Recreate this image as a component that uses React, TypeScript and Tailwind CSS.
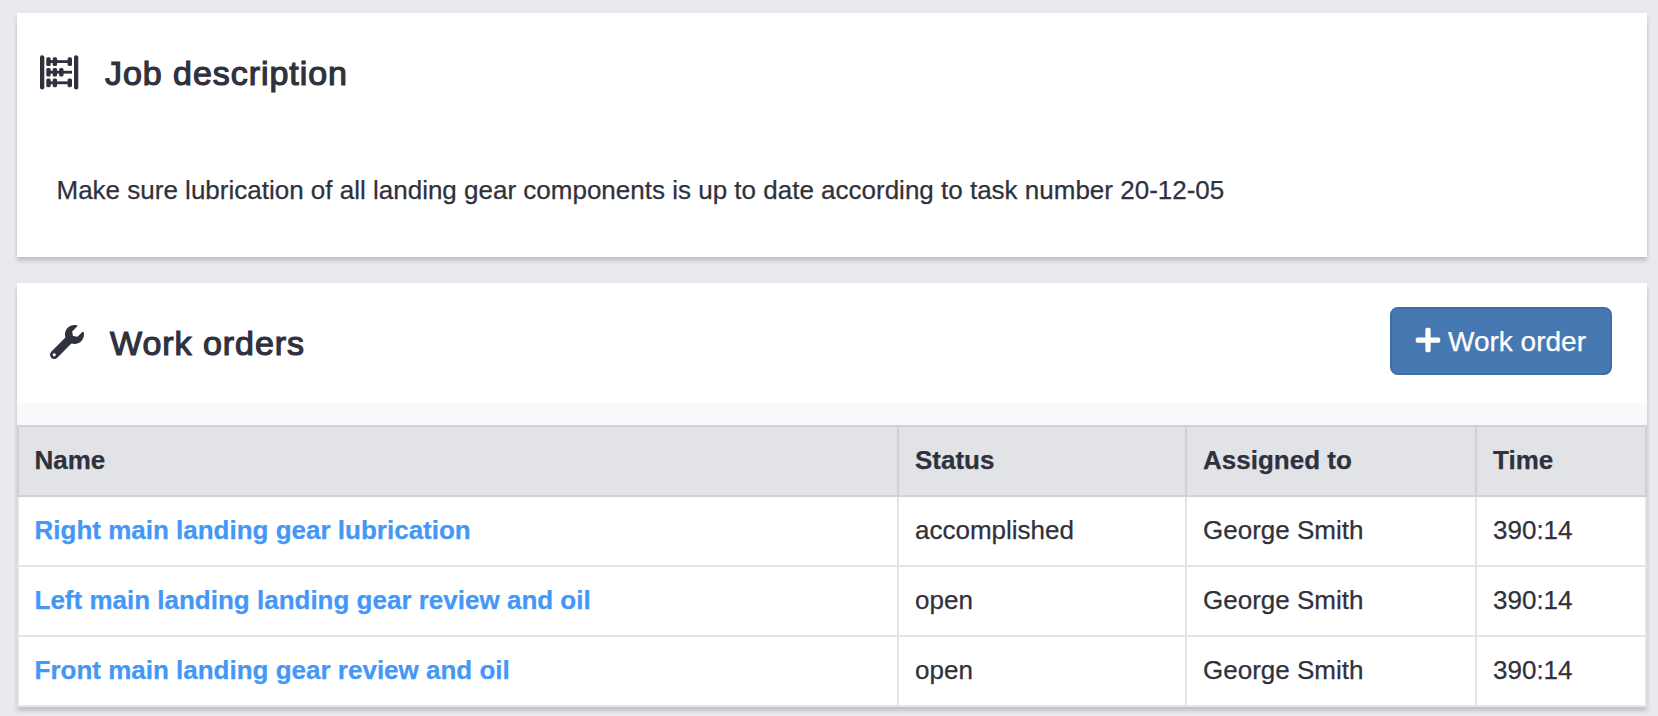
import { FaPlus, FaWrench } from "react-icons/fa";

const orders = [
  { name: "Right main landing gear lubrication", status: "accomplished", assignee: "George Smith", time: "390:14" },
  { name: "Left main landing landing gear review and oil", status: "open", assignee: "George Smith", time: "390:14" },
  { name: "Front main landing gear review and oil", status: "open", assignee: "George Smith", time: "390:14" },
];

const cardShadow = "shadow-[0_4px_4px_rgba(0,0,0,0.14),0_2px_6px_rgba(0,0,0,0.05)]";
const headingText = "text-[34px] leading-[40px] tracking-[0.95px] [-webkit-text-stroke:1.2px_currentColor]";

const beads = [
  { y: 2.3, xs: [7.3, 13.7, 28.6] },
  { y: 12.9, xs: [7.3, 13.7, 20.1] },
  { y: 23.5, xs: [7.3, 13.7, 28.6] },
];

function AbacusIcon() {
  return (
    <svg width="40" height="36" viewBox="0 0 40 36" fill="currentColor" stroke="none" className="shrink-0">
      <rect x="1" y="0.2" width="4.3" height="34.4" rx="2.1" />
      <rect x="35" y="0.2" width="4.3" height="34.4" rx="2.1" />
      {beads.map((row) => (
        <g key={row.y}>
          <rect x="8" y={row.y + 2.9} width="25" height="2.8" />
          {row.xs.map((x) => (
            <rect key={x} x={x} y={row.y} width="4.4" height="8.7" rx="1.6" />
          ))}
        </g>
      ))}
    </svg>
  );
}

export default function App() {
  return (
    <div className="flex h-[716px] w-[1658px] flex-col gap-[26px] overflow-hidden bg-[#e9eaee] pt-[13px] pr-[11px] pl-[17px] font-['Liberation_Sans',Arial,sans-serif] text-[26px] text-[#2f313c] [-webkit-text-stroke:0.25px_currentColor]">
      <section className={`h-[244px] shrink-0 bg-white ${cardShadow}`}>
        <header className="flex h-[120px] items-center pl-[22px]">
          <AbacusIcon />
          <h2 className={`pl-[26px] ${headingText}`}>Job description</h2>
        </header>
        <p className="pt-[42px] pl-[39.5px] leading-[30px]">
          Make sure lubrication of all landing gear components is up to date according to task number 20-12-05
        </p>
      </section>

      <section className={`shrink-0 bg-[#f8f9fb] ${cardShadow}`}>
        <header className="flex h-[120px] items-center bg-white pr-[35px] pl-[33px]">
          <FaWrench className="mb-[2px] size-[34px] shrink-0" />
          <h2 className={`pl-[26px] ${headingText}`}>Work orders</h2>
          <button className="mb-[4px] ml-auto flex h-[68px] w-[222px] items-center gap-[6px] rounded-[8px] border-2 border-[#3f6ca6] bg-[#4679b2] pl-[22px] text-[28px] text-white">
            <FaPlus className="mb-[2px] shrink-0" />
            <span className="pt-[1px] whitespace-nowrap">Work order</span>
          </button>
        </header>
        <table className="mt-[22px] w-full table-fixed border-separate border-spacing-0 bg-white text-left">
          <colgroup>
            <col className="w-[882px]" />
            <col className="w-[288px]" />
            <col className="w-[290px]" />
            <col className="w-[170px]" />
          </colgroup>
          <thead>
            <tr className="h-[72px] bg-[#e2e3e7]">
              {["Name", "Status", "Assigned to", "Time"].map((label) => (
                <th
                  key={label}
                  className="border-y-2 border-r-2 border-[#d0d1d6] pt-0 pb-[2px] pl-[16px] font-bold first:border-l-2 first:pl-[15.5px]"
                >
                  {label}
                </th>
              ))}
            </tr>
          </thead>
          <tbody>
            {orders.map((order) => (
              <tr
                key={order.name}
                className="h-[70px] [&>td]:border-r-2 [&>td]:border-b-2 [&>td]:border-[#e4e5ea] [&>td]:pb-[2px] [&>td]:pl-[16px] [&>td:first-child]:border-l-2 [&>td:first-child]:pl-[15.5px]"
              >
                <td className="font-bold text-[#4497f7]">
                  <a href="#">{order.name}</a>
                </td>
                <td>{order.status}</td>
                <td>{order.assignee}</td>
                <td>{order.time}</td>
              </tr>
            ))}
          </tbody>
        </table>
      </section>
    </div>
  );
}
